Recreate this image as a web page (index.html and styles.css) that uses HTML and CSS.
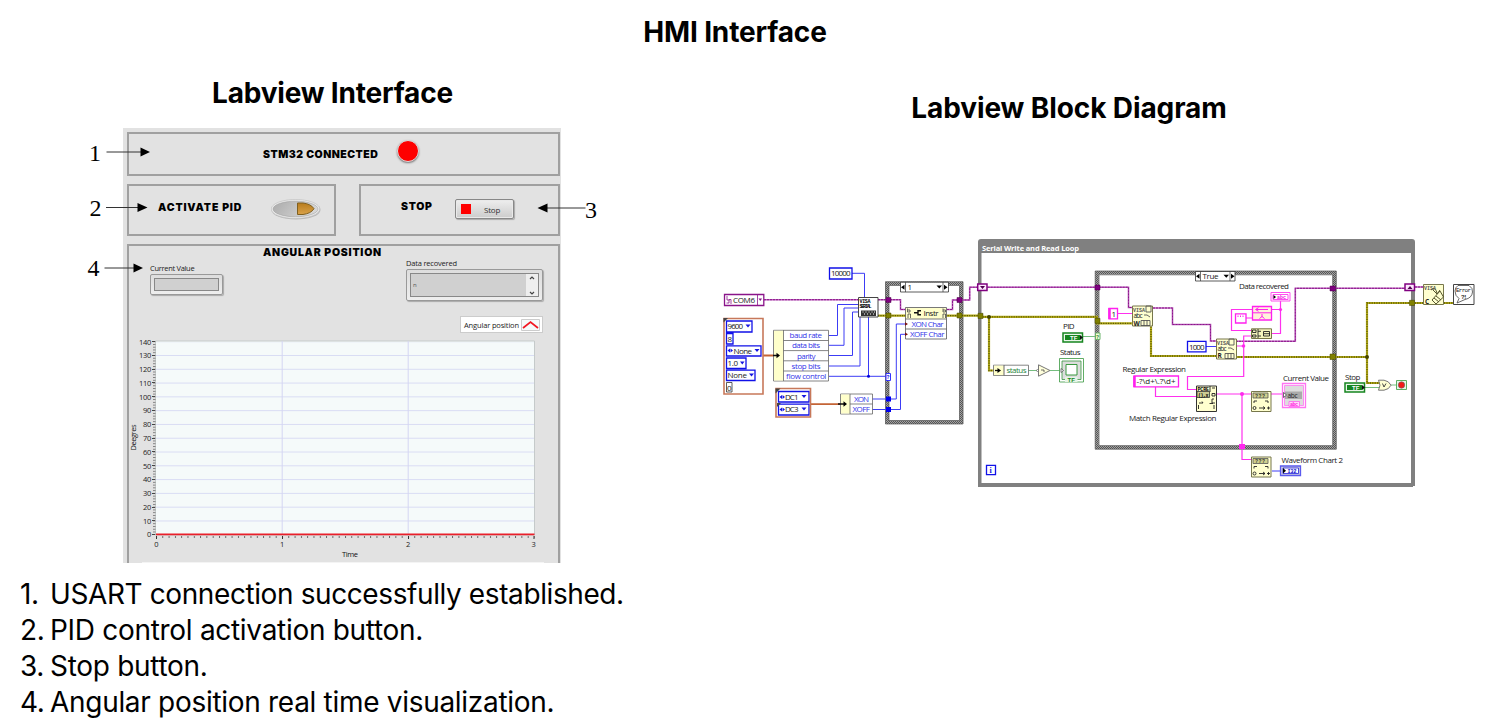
FILE: index.html
```html
<!DOCTYPE html>
<html lang="en">
<head>
<meta charset="utf-8">
<title>HMI Interface</title>
<link rel="stylesheet" href="styles.css">
</head>
<body>
<main class="slide">
<h1 class="title"><span class="t1">HMI Interface</span></h1>
<section class="left">
  <h2 class="heading"><span class="t2">Labview Interface</span></h2>
  <div class="figure">
    <div class="panel">
      <div class="card connected"><span class="black">STM32 CONNECTED</span><i class="led"></i></div>
      <div class="row">
        <div class="card activate"><span class="black">ACTIVATE PID</span>
          <svg class="toggle" width="50" height="21" viewBox="0 0 50 21"><defs><linearGradient id="metal" x2="1" y2=".3"><stop stop-color="#aaa"/><stop offset="1" stop-color="#d6d6d6"/></linearGradient><linearGradient id="amber" x2="0" y2="1"><stop stop-color="#b87c1c"/><stop offset="1" stop-color="#d9a24a"/></linearGradient></defs><ellipse cx="25" cy="11" rx="24.5" ry="9.5" fill="#bbb"/><ellipse cx="24.5" cy="10" rx="24.3" ry="9.5" fill="#ececec" stroke="#bbb" stroke-width=".6"/><ellipse cx="24.5" cy="10" rx="22.5" ry="7.8" fill="url(#metal)" stroke="#999" stroke-width=".5"/><path d="M26.500 4H32Q40 5 43 9.700 40 14.500 32 15.500H26.500Z" fill="url(#amber)" stroke="#806020" stroke-width="1"/></svg>
        </div>
        <div class="card halt"><span class="black">STOP</span><button class="stop"><i></i><span>Stop</span></button></div>
      </div>
      <div class="card position">
        <h3 class="black">ANGULAR POSITION</h3>
        <div class="fields">
          <label class="current"><span>Current Value</span><b class="bezel"><i></i></b></label>
          <label class="data"><span>Data recovered</span><b class="bezel"><i><em>n</em><svg width="12" height="22" viewBox="0 0 12 22"><path d="M0 0H12V22H0Z" fill="#eee"/><path d="M4 5 6 3 8 5M4 18 6 20 8 18" fill="none" stroke="#444" stroke-width="1.200"/></svg></i></b></label>
        </div>
        <div class="legend"><span>Angular position</span><svg width="19" height="12" viewBox="0 0 19 12"><path d="M.5.5H18.500V11.500H.5Z" fill="#f5fafa" stroke="#ccc"/><path d="M2 9 9.500 3 17 9" fill="none" stroke="#f21822" stroke-width="1.700"/></svg></div>
        <svg class="chart" width="431" height="230" viewBox="128 333 431 230">
          <defs><pattern id="rows" x="156" y="341.200" width="378" height="13.790" patternUnits="userSpaceOnUse"><path d="M0 .5H378" stroke="#d9dcf4"/></pattern>
          <pattern id="yt" x="151" y="341.200" width="5" height="2.758" patternUnits="userSpaceOnUse"><path d="M2 .5H4.500" stroke="#666" stroke-width=".8"/></pattern>
          <pattern id="xt" x="156" y="536" width="6.300" height="3" patternUnits="userSpaceOnUse"><path d="M.5 0V2" stroke="#555" stroke-width=".9"/></pattern></defs>
          <path d="M155.500 341H534.500V535H155.500Z" fill="#f5fafa" stroke="#c5caca"/>
          <path d="M156 342H534V534H156Z" fill="url(#rows)"/><path d="M282.200 341V535M408.200 341V535" stroke="#d4d6f2"/>
          <path d="M151 341H156V535H151Z" fill="url(#yt)"/><path d="M156 536H534.500V539H156Z" fill="url(#xt)"/>
          <path d="M156.500 536V539M282.500 536V539M408.500 536V539M534 536V539" stroke="#333"/>
          <path d="M156 534.400H534.500" stroke="#e9202b" stroke-width="1.700"/>
          <g class="ticks" text-anchor="end"><text x="151" y="344.500">140</text><text x="151" y="358.300">130</text><text x="151" y="372.100">120</text><text x="151" y="385.800">110</text><text x="151" y="399.600">100</text><text x="151" y="413.400">90</text><text x="151" y="427.200">80</text><text x="151" y="441">70</text><text x="151" y="454.800">60</text><text x="151" y="468.500">50</text><text x="151" y="482.300">40</text><text x="151" y="496.100">30</text><text x="151" y="509.900">20</text><text x="151" y="523.700">10</text><text x="151" y="537.300">0</text></g>
          <g stroke="#444"><path d="M152 341.500H155M152 355.500H155M152 369.500H155M152 382.500H155M152 396.500H155M152 410.500H155M152 424.500H155M152 438.500H155M152 451.500H155M152 465.500H155M152 479.500H155M152 493.500H155M152 507.500H155M152 520.500H155M152 534.500H155"/></g>
          <g class="ticks" text-anchor="middle"><text x="156.300" y="546.500">0</text><text x="282" y="546.500">1</text><text x="408" y="546.500">2</text><text x="533.500" y="546.500">3</text></g>
          <text class="axis" x="342" y="557" textLength="16">Time</text><text class="axis" transform="translate(135.500 450.500) rotate(-90)" textLength="26">Deegres</text>
          <path d="M142 562.500H544" stroke="#f4f4f4"/>
        </svg>
      </div>
    </div>
    <svg class="callouts" width="520" height="160" viewBox="84 128 520 160">
      <g class="number"><text x="89" y="161">1</text><text x="89.500" y="215.500">2</text><text x="585" y="217.500">3</text><text x="87.500" y="275.500">4</text></g>
      <path d="M106.500 152H141M106 207.500H138M104.500 268H134M547 208H585.500" stroke="#333"/>
      <path d="M140.500 147.500 150 152 140.500 156.500ZM137.500 203 147.500 207.500 137.500 212ZM133.500 263.500 143 268 133.500 272.500ZM547.500 203.500 537.500 208 547.500 212.500Z"/>
    </svg>
  </div>
  <ol class="notes">
    <li><span>1.</span> <span class="tight">USART connection successfully established.</span></li>
    <li><span>2.</span> <span>PID control activation button.</span></li>
    <li><span>3.</span> <span>Stop button.</span></li>
    <li><span>4.</span> <span>Angular position real time visualization.</span></li>
  </ol>
</section>
<section class="right">
  <h2 class="heading"><span class="t3">Labview Block Diagram</span></h2>
  <svg class="diagram" width="781" height="265" viewBox="715 230 781 265">
    <defs>
      <pattern id="check" width="2" height="2" patternUnits="userSpaceOnUse"><path d="M0 0H2V2H0Z" fill="#a4a4a4"/><path d="M0 0H1V1H0ZM1 1H2V2H1Z" fill="#555"/></pattern>
      <g id="tf"><path d="M1 1H20.500V10H1Z" fill="#eaf6ea" stroke="#16851f" stroke-width="1.500"/><path d="M3 3H18V8H3Z" fill="#16851f"/><path d="M18 3 21 5.500 18 8Z" fill="#111"/><text class="tfbit" x="8" y="8" fill="#fff" textLength="7.500">TF</text></g>
      <g id="visa"><path d="M.5.5H20.500V20.500H.5Z" fill="#ffffcf" stroke="#77774c"/><text class="bit" x="1" y="6" fill="#555" textLength="12">VISA</text></g>
      <g id="convert"><path d="M.5.5H20V20.500H.5Z" fill="#ffffcf" stroke="#77774c"/><path d="M2 2H17V7H2Z" fill="#cfcf8d" stroke="#555" stroke-width=".8"/><text class="bit" x="4" y="6.800" fill="#333" textLength="10">???</text><path d="M3 12V10H6M17 12V10H14M2 17a1.500 1.500 0 1 0 3 0a1.500 1.500 0 1 0-3 0M8 17H14M12 15.500 14 17 12 18.500M16 17H19M17.500 15.500V18.500" fill="none" stroke="#222" stroke-width=".9"/></g>
    </defs>
    <!-- while loop frame -->
    <path d="M978 487V242Q978 239 981 239H1412Q1415 239 1415 242V483H1411V253H981.500V483H1415V486H1413V487Z" fill="#808080" fill-rule="evenodd"/>
    <!-- case structures -->
    <g fill="none" stroke="url(#check)" stroke-width="3.600"><path d="M887.200 283.500H961.300V422.300H887.200Z"/><path d="M1097 272.800H1334.500V447.500H1097Z"/></g>
    <g fill="none" stroke="#555" stroke-width=".7"><path d="M885.500 281.700H963V424H885.500ZM889 285.500H959.500V420.500H889ZM1095.200 271H1336.300V449.200H1095.200ZM1099 274.800H1332.700V445.600H1099Z"/></g>
    <!-- refnum wires -->
    <path class="ref" d="M764 299.700H900.500V309.500H905M947 309.500H952.500V300H969.700V287.200H1128.500V307.500H1133M1153 308H1172.500V324.500H1210.500V341H1216M1236 341.300H1295.300V288.300H1405M1415 287H1423"/>
    <path class="ref-dash" d="M764 299.700H900.500V309.500H905M947 309.500H952.500V300H969.700V287.200H1128.500V307.500H1133M1153 308H1172.500V324.500H1210.500V341H1216M1236 341.300H1295.300V288.300H1405M1415 287H1423"/>
    <!-- error wires -->
    <path class="err" d="M878 315.700H980V316.900H1097V323.300H1132M989 317V370.500H994M1151 326.500V356H1216M1236 357H1367V303H1423M1367 357V383H1380M1444 303H1453"/>
    <path class="err-dash" d="M878 315.700H980V316.900H1097V323.300H1132M989 317V370.500H994M1151 326.500V356H1216M1236 357H1367V303H1423M1367 357V383H1380M1444 303H1453"/>
    <circle cx="989" cy="317" r="2" fill="#444400"/><circle cx="1367" cy="357" r="2" fill="#444400"/>
    <!-- numeric wires -->
    <path d="M852 273.300H864.500V297M829 335.500H837.500V304.500H858M829 345.300H844V308H858M829 355.500H852.500V312H858M829 366H860V317M829 376.300H888M868.500 317V376M872 399H896.300V324H905M872 409.500H900.500V334.300H905M1206 346.500H1216M1272 471H1281" fill="none" stroke="#3c3cf5"/>
    <circle cx="868.500" cy="376.300" r="1.500" fill="#00d"/>
    <!-- string wires -->
    <path class="str" d="M1118 313.500H1132M1155.500 387V396.500H1196M1236 346H1243.700V336H1251M1243.700 346V376.500H1187.500V389.500H1196M1217 394H1251M1242 394V459.500H1251M1271 394H1283M1280.500 301V333.500H1271M1280.500 309.500H1231.500V330.500H1251M1246 318H1253"/>
    <g fill="#ff28ee"><circle cx="1243.500" cy="346" r="1.800"/><circle cx="1280.500" cy="309.500" r="1.600"/><circle cx="1242" cy="394" r="2"/><path d="M1239 444H1245V449H1239Z"/></g>
    <path d="M763 355.500H776M811 404.200H843" stroke="#c46436" stroke-width="1.800"/>
    <path d="M1028 370.500H1037M1050 370.500H1060M1083 336.500H1095M1365 387.500H1380M1391 385H1396" stroke="#76bd80"/>
    <!-- tunnels -->
    <path d="M886 297.500H891V302.500H886ZM957 297.500H962V302.500H957ZM1095 285H1100V290H1095ZM1330 286H1335.500V291H1330Z" fill="#800080" stroke="#4a004a" stroke-width=".5"/>
    <path d="M886 313H891V318H886ZM957 313H962V318H957ZM978 313.300H983V318.500H978ZM1095 318.300H1100V323.300H1095ZM1330 354H1335.500V359.500H1330ZM1409.500 300.300H1414.500V305.500H1409.500Z" fill="#808000" stroke="#444400" stroke-width=".5"/>
    <path d="M886 396.500H891V401.500H886ZM886 407H891V412H886Z" fill="#00e"/>
    <path d="M886 373.500H890.500V380.500H886Z" fill="#fff" stroke="#33f"/><text class="bit" x="886.500" y="379.300" fill="#00e">?</text>
    <path d="M1095.500 333H1100V339.500H1095.500Z" fill="#f4ffd8" stroke="#6bb36b"/><text class="bit" x="1096" y="338.800" fill="#287a28">?</text>
    <path d="M977.700 284H987V290.500H977.700ZM1405 284H1414.500V290.500H1405Z" fill="#fde8fd" stroke="#800080" stroke-width="1.500"/><path d="M980 286H985L982.500 289ZM1407.500 289H1412.500L1410 286Z" fill="#500050"/>
    <!-- serial configuration inputs -->
    <path d="M829.500 268H852V279H829.500ZM726.500 321H752V332H726.500ZM726.500 333.500H733V344H726.500ZM726.500 345.800H761V356H726.500ZM726.500 358H746V368.500H726.500ZM726.500 370.200H755V380.500H726.500ZM778.500 391.500H809V402H778.500ZM778.500 404.200H809V415H778.500ZM1187.500 341.300H1206V351.800H1187.500ZM986.500 465.300H995.500V474.700H986.500Z" fill="#fff" stroke="#1111e8" stroke-width="1.300"/>
    <path d="M726.500 382.500H732V392H726.500Z" fill="#fff" stroke="#333" stroke-width=".8"/>
    <path d="M724 318.500H763V394H724ZM776 388.500H810.500V417H776Z" fill="none" stroke="#c7785a" stroke-width="1.600"/>
    <path d="M723.500 318H728L723.500 322.500ZM775.500 388.500H780.500L775.500 393.500ZM777 403H781L777 407Z" fill="#444"/>
    <path d="M724.500 294.500H763.800V305.500H724.500Z" fill="#fff" stroke="#8a148a" stroke-width="1.300"/><path d="M757.500 295V305M727 296V300H729.500M726.500 303H729V299.500H731V304" fill="none" stroke="#8a148a" stroke-width=".8"/><path d="M758.500 298.500H762L760.300 301Z" fill="#8a148a"/>
    <path d="M745.500 324.500H750.500L748 327.500ZM754.500 349H759.500L757 352ZM740 361.500H744.500L742.300 364.500ZM749 373.500H754L751.500 376.500ZM801.500 395H806.500L804 398ZM801.500 407.500H806.500L804 410.500ZM727.500 350.500 730 348.500V352.500ZM733 350.500 730.500 348.500V352.500ZM779.500 397 782 395V399ZM785 397 782.500 395V399ZM779.500 409.500 782 407.500V411.500ZM785 409.500 782.500 407.500V411.500Z" fill="#1616e0"/>
    <g class="lab"><text x="831" y="276.300" textLength="19.500">10000</text><text x="733" y="302.800" textLength="22">COM6</text><text x="727.500" y="329.300" textLength="15.500">9600</text><text x="727.500" y="341.500">8</text><text x="733.500" y="353.800" textLength="18.500">None</text><text x="727.500" y="366.200" textLength="10.500">1.0</text><text x="727.500" y="378.300" textLength="19.500">None</text><text x="727" y="390.500">0</text><text x="785" y="399.700" textLength="13.500">DC1</text><text x="785" y="412.200" textLength="13.500">DC3</text></g>
    <path d="M773.500 330.300H828.500V381H773.500ZM840.500 394H872.500V414H840.500Z" fill="#fff" stroke="#666" stroke-width=".8"/><path d="M774 330.700H783.500V380.600H774ZM841 394.400H850V413.600H841Z" fill="#ffffcb"/><path d="M783.500 330V381M783.500 340.500H828.500M783.500 350.600H828.500M783.500 360.800H828.500M783.500 371H828.500M850 394V414M850 404H872.500" fill="none" stroke="#666" stroke-width=".8"/>
    <path d="M773 355.500H778M838 404H845M996 370.500H999" stroke="#111" stroke-width="1.500"/><path d="M776.500 352.800 780 355.500 776.500 358.200ZM843.500 401.300 847 404 843.500 406.700Z"/>
    <g class="lab blue"><text x="789.500" y="338" textLength="32.500">baud rate</text><text x="792" y="348.300" textLength="28">data bits</text><text x="797" y="358.500" textLength="18.500">parity</text><text x="791.500" y="368.700" textLength="29">stop bits</text><text x="785.500" y="378.900" textLength="40.500">flow control</text><text x="854" y="401.700" textLength="15">XON</text><text x="852.500" y="412" textLength="17.500">XOFF</text></g>
    <path d="M858.500 297.500H878V317H858.500Z" fill="#fff" stroke="#444"/><text class="bit" x="859.500" y="303" textLength="11">VISA</text><text class="bit" x="859.500" y="307.500" textLength="12">SERIAL</text><path d="M861 310.500H876V316H861Z" fill="#333"/><path d="M862.500 312H863.500M865.500 312H866.500M868.500 312H869.500M871.500 312H872.500M874 312H875M864 314H865M867 314H868M870 314H871M873 314H874" stroke="#fff"/>
    <!-- instrument property node -->
    <path d="M900.500 282.200H948.500V292H900.500Z" fill="#fff" stroke="#333" stroke-width=".8"/><path d="M905.500 282.200V292M943 282.200V292" stroke="#333" stroke-width=".7"/><path d="M904.500 284.700V289.700L901 287.200ZM944 284.700V289.700L947.500 287.200ZM936.500 285.500H942L939.300 288.500Z"/>
    <path d="M905.500 307.500H946.500V339H905.500Z" fill="#fff" stroke="#555" stroke-width=".8"/><path d="M906 308H946V318.800H906Z" fill="#ffffcb"/><path d="M905.500 319H946.500M905.500 329H946.500" stroke="#555" stroke-width=".8"/><path d="M907.500 308.500V312H910V310H908M943 308.500V312H945.500V310H943M908 318V314H910.500V318M943 318V314H945.500V318" fill="none" stroke="#444" stroke-width=".8"/><path d="M914 312.800H918M921 310.800H918V314.800H921" fill="none" stroke="#111" stroke-width="1.400"/><path d="M905 322.200 908 324 905 325.800ZM905 332.500 908 334.300 905 336.100Z" fill="#711"/>
    <g class="lab"><text x="907.500" y="290">1</text><text x="923.500" y="316" textLength="15">Instr</text></g><g class="lab blue"><text x="911.500" y="326.700" textLength="32">XON Char</text><text x="910" y="337" textLength="34.500">XOFF Char</text></g>
    <!-- loop contents -->
    <text class="loop" x="982" y="251" textLength="97">Serial Write and Read Loop</text>
    <path d="M993.500 365.200H1028.500V375.500H993.500Z" fill="#fff" stroke="#666" stroke-width=".8"/><path d="M994 365.600H1004V375.100H994Z" fill="#ffffcb"/><path d="M1004 365V375.500" stroke="#666"/><path d="M995 370.500H999" stroke="#111" stroke-width="1.300"/><path d="M997.500 368 1001 370.500 997.500 373Z"/><text class="lab green" x="1006.500" y="373" textLength="20">status</text>
    <path d="M1038.500 364.800 1050 370.500 1038.500 376.200Z" fill="#ffffdc" stroke="#777"/><circle cx="1037.500" cy="370.500" r="1" fill="#fff" stroke="#555" stroke-width=".6"/><path d="M1041 370H1044V372" fill="none" stroke="#444" stroke-width=".8"/>
    <use href="#tf" x="1062" y="332"/><use href="#tf" x="1344" y="382"/>
    <path d="M1059.500 358.500H1083.500V382H1059.500Z" fill="#fff" stroke="#39983f" stroke-width=".8"/><path d="M1062 361H1081V379.500H1062Z" fill="#ddd" stroke="#39983f" stroke-width=".8"/><path d="M1066 364.500H1077V375H1066Z" fill="#fff" stroke="#39983f"/><path d="M1065 377H1077.500V382H1065Z" fill="#e6f5e6"/><text class="tfbit" x="1067.500" y="381.800" fill="#16851f" textLength="7.500">TF</text><path d="M1061 368.500 1063.500 370.500 1061 372.500Z" fill="#fff" stroke="#444" stroke-width=".7"/>
    <g class="lab"><text x="1063" y="329" textLength="11.500">PID</text><text x="1060" y="355" textLength="20.500">Status</text><text x="989.500" y="473" class="idx">i</text></g>
    <path d="M1195.500 271.500H1235V281H1195.500Z" fill="#fff" stroke="#333" stroke-width=".8"/><path d="M1200.500 271.500V281M1230 271.500V281" stroke="#333" stroke-width=".7"/><path d="M1199.500 273.800V278.800L1196 276.300ZM1231 273.800V278.800L1234.500 276.300ZM1223.500 274.800H1229L1226.300 277.800Z"/><text class="lab" x="1202.500" y="279" textLength="16">True</text>
    <path d="M1109 308.500H1117.500V318.800H1109ZM1134 376H1178.500V386.800H1134Z" fill="#fff" stroke="#ff20ee" stroke-width="1.300"/><path d="M1109.500 308V319M1134.500 376V387" stroke="#ff20ee" stroke-width="2.500"/>
    <use href="#visa" x="1132" y="305.500"/><path d="M1146 306H1151V312H1146ZM1144 315H1147L1150 317M1141 320.500H1150V325.500H1141ZM1144 320V326M1147 320V326" fill="none" stroke="#555" stroke-width=".9"/><text class="mini" x="1133.500" y="317.500" textLength="9">abc</text><text class="mini heavy" x="1133.500" y="325.500">W</text>
    <use href="#visa" x="1216" y="338.500"/><path d="M1229 339H1234V345H1229ZM1228 348H1231L1234 350M1225 353.500H1234V358.500H1225ZM1228 353V359M1231 353V359" fill="none" stroke="#555" stroke-width=".9"/><text class="mini" x="1217.500" y="350.500" textLength="9">abc</text><text class="mini heavy" x="1217.500" y="358">R</text>
    <g class="lab"><text x="1111.500" y="316.500">1</text><text x="1189" y="349.500" textLength="15.500">1000</text><text x="1122.500" y="372" textLength="63.500">Regular Expression</text><text x="1136.500" y="384.200" textLength="39">-?\d+\.?\d+</text><text x="1129" y="420.500" textLength="87.500">Match Regular Expression</text><text x="1239" y="289" textLength="50">Data recovered</text><text x="1283" y="380.500" textLength="46">Current Value</text><text x="1281.500" y="463" textLength="61.500">Waveform Chart 2</text><text x="1345" y="379.500" textLength="15.500">Stop</text></g>
    <path d="M1196.500 386H1216.500V411.500H1196.500Z" fill="#ffffcf" stroke="#333"/><path d="M1197 391.500H1209.500V397.500H1197Z" fill="#ccca92" stroke="#333" stroke-width=".8"/><text class="bit" x="1197.500" y="390.800" textLength="11.500">PCRE</text><text class="bit" x="1198" y="396.800" textLength="10.500">(),x</text><path d="M1210 386V392M1212 388H1215M1212 393.500H1215V396H1212ZM1214 399H1212V403H1215M1199 403H1203L1202 401.500M1213 403.500H1209.500M1198.500 405V409M1214 405V409" fill="none" stroke="#222" stroke-width=".9"/>
    <path d="M1271 292.500H1290V301H1271Z" fill="#fff" stroke="#ff50ef" stroke-width="1"/><path d="M1273 294.500H1288V299.500H1273Z" fill="#fff" stroke="#ff20ee" stroke-width=".8"/><path d="M1273.500 295 1276 297 1273.500 299Z"/><text class="bit" x="1277" y="299" fill="#f010dd" textLength="9">abc</text>
    <path d="M1252.500 306.500H1271.500V320H1252.500Z" fill="#fff2db" stroke="#ff20ee" stroke-width="1.300"/><path d="M1253 312.800H1271M1256 309.500H1268M1258.500 307.700 1255.500 309.500 1258.500 311.300M1262 314V317M1259.500 318.500 1262 316.500 1264.500 318.500" fill="none" stroke="#ff20ee"/>
    <path d="M1235.500 313.800H1246V323H1235.500Z" fill="#fff" stroke="#ff20ee" stroke-width="1.300"/><path d="M1238 315.500V317M1240.500 315.500V317M1243 315.500V317" stroke="#ff20ee"/>
    <path d="M1251.500 328.800H1271.500V338.500H1251.500Z" fill="#f5f5bd" stroke="#777747"/><path d="M1252.500 330H1256V332.500H1252.500ZM1252.500 335H1256V337H1252.500ZM1258 329V338M1258 331.300H1261M1258 336H1261M1263.500 331.500H1269.500V336H1263.500ZM1264 333.700H1270" fill="none" stroke="#222" stroke-width=".9"/>
    <use href="#convert" x="1251" y="391"/><use href="#convert" x="1251" y="456.500"/>
    <path d="M1282.500 383.500H1305.500V407.500H1282.500Z" fill="#fff" stroke="#ff75f2" stroke-width="1.300"/><path d="M1284.500 385.500H1303.500V405.500H1284.500Z" fill="#ddd" stroke="#ff75f2" stroke-width=".8"/><path d="M1285 391.500H1302V399H1285Z" fill="#aaa"/><path d="M1283.500 392.500 1286.500 395 1283.500 397.500Z" fill="#fff" stroke="#333" stroke-width=".7"/><text class="mini" x="1287.500" y="397.500" textLength="10">abc</text><path d="M1289 401.500H1299.500V406.500H1289Z" fill="#ffd9fb" stroke="#ff50ef" stroke-width=".7"/><text class="bit" x="1290" y="406" fill="#f2d" textLength="8">abc</text>
    <path d="M1280.500 466H1300.500V475.500H1280.500Z" fill="#ccd" stroke="#5a5aee" stroke-width="1.300"/><path d="M1283 468H1298.500V473.500H1283Z" fill="#fff" stroke="#22d" stroke-width=".8"/><path d="M1283 468 1286 470.800 1283 473.500Z"/><text class="bit" x="1287.500" y="473" fill="#00c" textLength="9">I32</text>
    <!-- loop exit and close -->
    <path d="M1378.500 380.200H1384Q1389 381 1391 385.200 1389 389.500 1384 390.200H1378.500Q1381.500 385.200 1378.500 380.200Z" fill="#ffffd2" stroke="#777"/><path d="M1382.500 383.500 1384 387 1386 383.500" fill="none" stroke="#333" stroke-width=".9"/>
    <path d="M1396.500 380.500H1406.500V389.500H1396.500Z" fill="#e8f4e8" stroke="#4aa650" stroke-width=".9"/><circle cx="1401.500" cy="385" r="3.200" fill="#f31919" stroke="#666" stroke-width=".6"/>
    <use href="#visa" x="1423" y="284"/><text class="mini heavy" x="1425" y="303.500">C</text><path d="M1431 290Q1435 286 1437 293M1433 290 1437 294 1440 290M1432 300 1440 291 1443.500 297 1436 304ZM1434 298 1439 302M1436 296 1441 300" fill="none" stroke="#55552d"/>
    <path d="M1453.500 284.500H1474V304.500H1453.500Z" fill="#fff" stroke="#444"/><path d="M1458 285.500H1469Q1473 288 1472.500 292 1472 298 1465 299.500L1457 303 1459 298.500Q1455 296 1455 291 1455 287.500 1458 285.500Z" fill="#fff" stroke="#444" stroke-width=".8"/><text class="error" x="1456" y="292" textLength="15">Error</text><text class="error strong" x="1461" y="299" textLength="6">?!</text>
  </svg>
</section>
</main>
</body>
</html>
```
FILE: styles.css
```css
* { box-sizing: border-box; }
body { margin: 0; background: #fff; color: #000; font-family: "Open Sans", sans-serif; }
h1, h2, h3, ol { margin: 0; padding: 0; }
svg { display: block; }
.slide { width: 1496px; height: 724px; display: grid; grid-template: 62px 662px / 715px 781px; overflow: hidden; }
.title { grid-column: 1 / 3; padding: 12px 26px 0 0; text-align: center; font: 700 28px/40px Inter, sans-serif; }
.heading { font: 700 28px/40px Inter, sans-serif; white-space: nowrap; text-align: center; }
.t1 { letter-spacing: -.15px; }
.t2 { letter-spacing: -.2px; }
.t3 { letter-spacing: -.1px; }
.left .heading { padding: 11px 50px 0 0; height: 50px; }
.right .heading { padding: 26px 73px 0 0; height: 65px; }
.diagram { margin-top: 103px; }

.figure { position: relative; margin: 16px 0 0 123px; width: 438px; height: 435px; }
.callouts { position: absolute; left: -39px; top: 0; }
.number { font: 24px "Liberation Serif", serif; }
.panel { height: 435px; background: #e2e2e2; padding: 4px 1px 0 4px; display: flex; flex-direction: column; gap: 8px; }
.card { border: 2px solid #a0a0a0; display: flex; align-items: center; }
.black { font: 900 10.500px/12px Inter, sans-serif; white-space: nowrap; }
.connected { height: 44px; padding: 0 0 0 134px; }
.connected .black { letter-spacing: .5px; width: 134px; padding-top: 2px; }
.led { width: 22px; height: 22px; margin-top: -6px; border-radius: 50%; background: #fe0000; border: 1px solid #ddd; box-shadow: 0 1px 2px #777; }
.row { display: flex; justify-content: space-between; height: 52px; }
.activate { width: 209px; padding-left: 29px; }
.activate .black { width: 113px; letter-spacing: .85px; margin-top: -4px; }
.toggle { margin-top: -1px; }
.halt { width: 201px; padding-left: 40px; }
.halt .black { width: 54px; letter-spacing: .7px; margin-top: -6px; }
.stop { width: 59px; height: 20px; margin-top: -2px; display: flex; align-items: center; gap: 13px; padding: 0 5px; border: 1px solid #888; border-radius: 2px; background: linear-gradient(#eee, #ccc); box-shadow: inset 0 0 0 1px #e9e9e9, 1px 1px 1px #aaa; font: 8px "Open Sans", sans-serif; letter-spacing: -.2px; color: #333; }
.stop i { width: 10px; height: 10px; background: #f00; }
.position { height: 319px; border-bottom: 0; display: block; }
.position h3 { padding: 1px 0 0 134px; height: 12px; letter-spacing: .75px; }
.fields { display: flex; align-items: flex-start; justify-content: space-between; padding: 0 15px 0 21px; height: 58px; }
.fields span { display: block; font-size: 7.500px; line-height: 10px; white-space: nowrap; letter-spacing: -.2px; color: #222; }
.current { width: 73px; padding-top: 5px; }
.current span { letter-spacing: -.3px; }
.data { width: 137px; }
.bezel { display: block; border: 1px solid #999; border-radius: 2px; padding: 3px; background: linear-gradient(#ddd, #eee); box-shadow: 1px 1px 1px #aaa; }
.bezel i { display: flex; justify-content: space-between; align-items: center; border: 1px solid #888; background: #d0d0d0; font-style: normal; }
.current .bezel { height: 21px; margin-top: 1px; }
.current i { height: 13px; }
.data .bezel { height: 32px; margin-top: 1px; }
.data i { height: 24px; }
.data em { font: 6px "Open Sans", sans-serif; color: #555; padding-left: 2px; }
.legend { display: flex; align-items: center; justify-content: space-between; width: 83px; height: 17px; margin-left: 331px; padding: 0 2px 0 3px; background: #fff; border: 1px solid #ccc; }
.legend span { font-size: 7.500px; white-space: nowrap; letter-spacing: -.15px; color: #222; }
.chart { margin-left: -1px; }
.ticks { font: 7.500px "Open Sans", sans-serif; letter-spacing: -.3px; fill: #222; }
.axis { font: 7.500px "Open Sans", sans-serif; fill: #111; }

.notes { list-style: none; margin: 13px 0 0 20px; font: 28px/36px Inter, sans-serif; letter-spacing: -.3px; white-space: nowrap; }
.notes li { display: flex; }
.notes li span:first-child { width: 30px; }
.notes .tight { letter-spacing: -.4px; }

.lab { font: 8px "Open Sans", sans-serif; fill: #222; }
.blue { fill: #3535e8; }
.green { fill: #28853c; }
.idx { font: 700 8px "Liberation Serif", serif; fill: #11d; }
.bit { font: 700 5px "Liberation Mono", monospace; }
.tfbit { font: 700 6px "Liberation Sans", sans-serif; }
.mini { font: 6.500px "Open Sans", sans-serif; fill: #222; }
.heavy { font-weight: 700; }
.error { font: 6px "Liberation Mono", monospace; fill: #222; }
.strong { font-weight: 700; }
.loop { font: 700 7.500px "Open Sans", sans-serif; fill: #fff; }
.ref { fill: none; stroke: #b95ab9; stroke-width: 1.600; }
.ref-dash { fill: none; stroke: #8b178b; stroke-width: 1; stroke-dasharray: 2 1; }
.err { fill: none; stroke: #b5ac19; stroke-width: 2.200; }
.err-dash { fill: none; stroke: #5a5800; stroke-width: 1.300; stroke-dasharray: 1.200 1.200; }
.str { fill: none; stroke: #ff30ee; stroke-width: 1.200; }
```
